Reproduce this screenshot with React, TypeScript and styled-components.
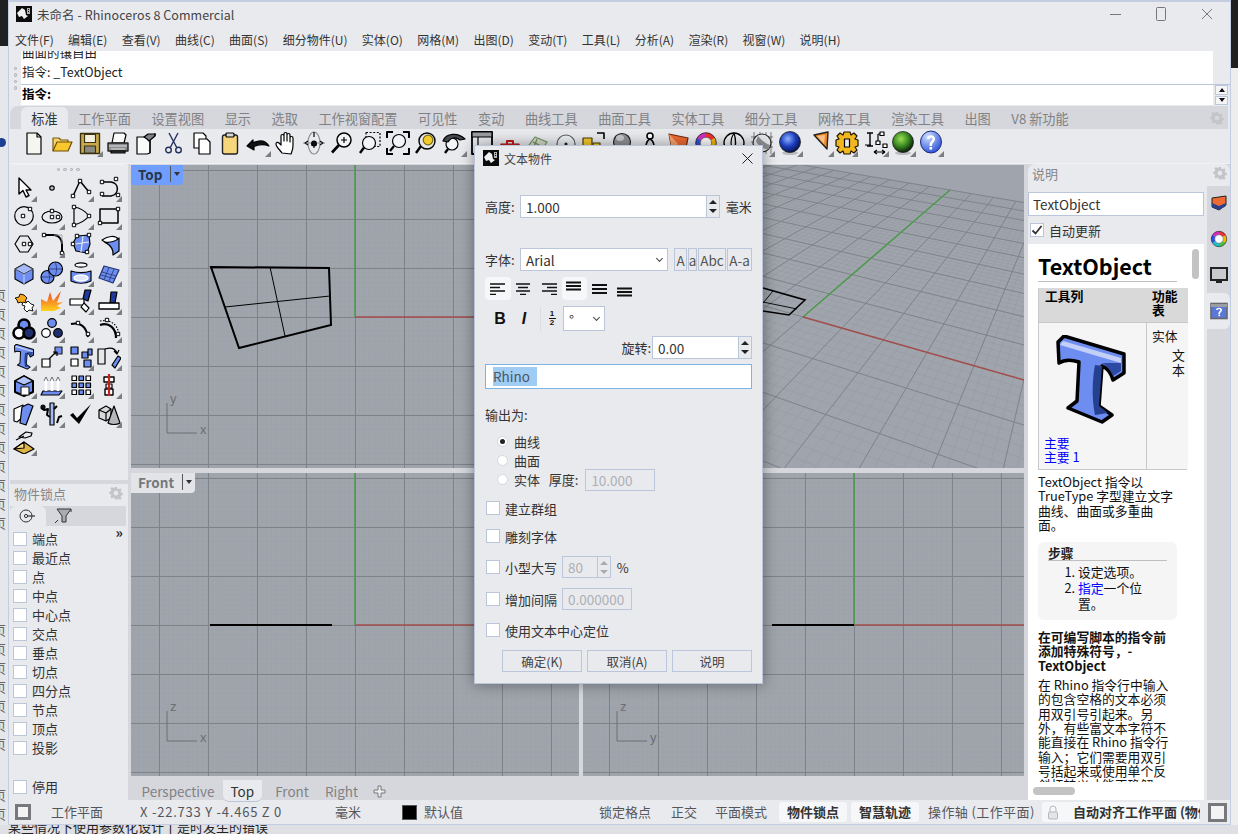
import React from "react";
import styled, { createGlobalStyle } from "styled-components";

const FONT = `"Noto Sans CJK SC", "Noto Sans", sans-serif`;
const PANEL = "#e9eaee";
const STRIP = "#d6d7dc";
const EDGE = "#bcc6da";
const BLUE = "#6d8ef0";

const GlobalStyle = createGlobalStyle`
  html, body { margin: 0; padding: 0; background: #e3e4e8; }
  * { box-sizing: border-box; }
  body { font-family: ${FONT}; font-size: 13px; color: #333; }
`;

/* ---------- page shell ---------- */

const Desktop = styled.div`
  width: 1238px;
  height: 834px;
  display: grid;
  grid-template-columns: 8px 1223px 7px;
  grid-template-rows: 825px 9px;
  overflow: hidden;
`;

const LeftSliver = styled.div`
  background: #e6e7ea;
  overflow: hidden;
  display: flex;
  flex-direction: column;
`;

const DarkCap = styled.div<{ $h: number }>`
  height: ${({ $h }) => $h}px;
  flex: none;
  background: #1f2022;
`;

const SliverDot = styled.div`
  width: 9px;
  height: 9px;
  margin: 92px 0 0 -3px;
  flex: none;
  border-radius: 50%;
  background: #1c3f94;
`;

const SliverText = styled.div<{ $mt: number }>`
  margin: ${({ $mt }) => $mt}px 0 0 -7px;
  width: 30px;
  flex: none;
  font-size: 13px;
  line-height: 19px;
  color: #666;
`;

const RightSliver = styled.div`
  background: #eceded;
  overflow: hidden;
`;

const BottomSliver = styled.div`
  grid-column: 1 / 4;
  background: #dfe0e4;
  overflow: hidden;
  padding-left: 8px;
  font-size: 13px;
  line-height: 14px;
  color: #222;
`;

const BottomText = styled.div`
  margin-top: -5px;
  white-space: nowrap;
`;

const Window = styled.div`
  position: relative;
  display: flex;
  flex-direction: column;
  height: 825px;
  background: ${PANEL};
  border: 1px solid #c3cce0;
  border-top-width: 2px;
`;

/* ---------- title + menu ---------- */

const TitleBar = styled.div`
  height: 28px;
  flex: none;
  display: flex;
  align-items: center;
  padding: 0 0 4px 7px;
`;

const TitleText = styled.span`
  margin-left: 5px;
  font-size: 12.5px;
  color: #444;
  letter-spacing: 0.05px;
`;

const Caption = styled.div`
  margin-left: auto;
  display: flex;
  height: 24px;
`;

const CaptionButton = styled.div`
  width: 46px;
  display: flex;
  align-items: center;
  justify-content: center;
`;

const MenuBar = styled.div`
  height: 21px;
  flex: none;
  display: flex;
  padding-left: 6px;
  gap: 14.35px;
  font-size: 12px;
  line-height: 19px;
  color: #333;
`;

/* ---------- command pane ---------- */

const CommandPane = styled.div`
  flex: none;
  height: 54px;
  display: flex;
  padding-left: 1px;
`;

const SideGrip = styled.div`
  width: 11px;
  flex: none;
  display: flex;
  flex-direction: column;
  align-items: center;
  justify-content: center;
  gap: 3px;
  border-radius: 6px 0 0 6px;
  background: ${PANEL};
`;

const GripDot = styled.i`
  width: 3.5px;
  height: 3.5px;
  border-radius: 50%;
  border: 1px solid #a8abb2;
  background: #dadbe0;
`;

const CommandBody = styled.div`
  flex: 1;
  display: flex;
  flex-direction: column;
`;

const CommandHistory = styled.div`
  height: 33px;
  flex: none;
  background: #fff;
  margin-right: 17px;
  overflow: hidden;
  padding-left: 1px;
  font-size: 12.5px;
  line-height: 20px;
  color: #222;
`;

const ClippedLine = styled.div`
  margin-top: -8px;
  height: 19px;
`;

const CommandSplit = styled.div`
  height: 1px;
  flex: none;
  background: ${EDGE};
`;

const CommandInput = styled.div`
  height: 20px;
  flex: none;
  display: flex;
  background: #fff;
  padding-left: 1px;
  font-size: 12.5px;
  font-weight: 700;
  line-height: 17px;
  color: #000;
`;

const InputSpin = styled.div`
  margin-left: auto;
  width: 17px;
  background: ${PANEL};
  display: flex;
  flex-direction: column;
  align-items: center;
  justify-content: center;
  gap: 1px;
`;

const SpinKey = styled.div<{ $up?: boolean }>`
  width: 13px;
  height: 10px;
  background: #f4f5f7;
  border: 1px solid ${EDGE};
  display: flex;
  align-items: center;
  justify-content: center;
  &::after {
    content: "";
    border-left: 3px solid transparent;
    border-right: 3px solid transparent;
    ${({ $up }) => `${$up ? "border-bottom" : "border-top"}: 4px solid #111;`}
  }
`;

/* ---------- toolbar ---------- */

const ToolSection = styled.div`
  flex: none;
  margin: 1px 2px 0 1px;
  height: 57px;
  display: flex;
  flex-direction: column;
  border-radius: 8px 0 0 0;
  overflow: hidden;
`;

const ToolTabs = styled.div`
  height: 23px;
  flex: none;
  display: flex;
  align-items: flex-end;
  background: ${STRIP};
  padding-left: 11px;
  position: relative;
`;

const ToolTab = styled.div<{ $active?: boolean }>`
  height: 22px;
  padding: 0 10.25px;
  font-size: 13.2px;
  line-height: 24px;
  white-space: nowrap;
  color: ${({ $active }) => ($active ? "#333" : "#808185")};
  background: ${({ $active }) => ($active ? PANEL : "transparent")};
  border-radius: 6px 6px 0 0;
`;

const GearSpot = styled.div`
  position: absolute;
  right: 4px;
  top: 4px;
  width: 14px;
  height: 14px;
`;

const IconRow = styled.div`
  flex: 1;
  display: flex;
  padding: 0 0 0 10px;
  background: ${PANEL};
`;

const Slot = styled.div<{ $w?: number; $fly?: boolean; $ml?: number }>`
  position: relative;
  width: ${({ $w }) => $w || 28}px;
  height: 28px;
  flex: none;
  margin-left: ${({ $ml }) => $ml || 0}px;
  display: flex;
  align-items: center;
  justify-content: center;
  ${({ $fly }) =>
    $fly
      ? `&::after {
    content: "";
    position: absolute;
    right: 1px;
    bottom: 0;
    border-left: 6px solid transparent;
    border-bottom: 6px solid #7d7e82;
  }`
      : ""}
`;

/* ---------- main area ---------- */

const MainRow = styled.div`
  flex: 1;
  min-height: 0;
  display: flex;
  background: ${STRIP};
  border-top: 1px solid #f0f1f3;
`;

const LeftDock = styled.div`
  width: 119px;
  flex: none;
  display: flex;
  flex-direction: column;
  padding-left: 1px;
  background: ${PANEL};
`;

const ToolPanel = styled.div`
  height: 316px;
  flex: none;
  margin-right: 2px;
  border-radius: 7px 7px 0 0;
  background: ${PANEL};
  border-top: 1px solid #f2f2f4;
`;

const TopGrip = styled.div`
  height: 9px;
  display: flex;
  align-items: center;
  justify-content: center;
  gap: 3px;
`;

const ToolGrid = styled.div`
  display: grid;
  grid-template-columns: repeat(4, 28.3px);
  grid-auto-rows: 28.2px;
`;

const DockGap = styled.div`
  height: 4px;
  flex: none;
  background: ${STRIP};
`;

const SnapPanel = styled.div`
  flex: 1;
  margin-right: 2px;
  display: flex;
  flex-direction: column;
  min-height: 0;
`;

const PanelHead = styled.div`
  height: 22px;
  flex: none;
  display: flex;
  align-items: center;
  justify-content: space-between;
  padding: 0 3px 4px 4px;
  font-size: 13px;
  color: #85868a;
  border-radius: 7px 7px 0 0;
  background: ${PANEL};
`;

const SnapTabs = styled.div`
  height: 20px;
  flex: none;
  display: flex;
  background: ${STRIP};
`;

const SnapTab = styled.div<{ $active?: boolean }>`
  width: 36px;
  display: flex;
  align-items: center;
  justify-content: center;
  background: ${({ $active }) => ($active ? PANEL : "transparent")};
  border-radius: 6px 6px 0 0;
`;

const SnapList = styled.div`
  position: relative;
  flex: 1;
  display: flex;
  flex-direction: column;
  padding: 3px 0 0 3px;
`;

const SnapRow = styled.label<{ $gapTop?: number }>`
  height: 19px;
  flex: none;
  display: flex;
  align-items: center;
  gap: 5px;
  margin-top: ${({ $gapTop }) => $gapTop || 0}px;
  font-size: 13px;
  color: #333;
`;

const Box = styled.span`
  width: 14px;
  height: 14px;
  flex: none;
  background: #fff;
  border: 1px solid ${EDGE};
  display: flex;
  align-items: center;
  justify-content: center;
`;

const DialogBox = styled(Box)`
  margin: 0 5px 0 1px;
`;

const MoreMark = styled.span`
  position: absolute;
  right: 3px;
  top: -1px;
  font-size: 14px;
  font-weight: 700;
  line-height: 14px;
  color: #222;
`;

const Center = styled.div`
  flex: 1;
  min-width: 0;
  display: flex;
  flex-direction: column;
  padding: 1px 3px 0 3px;
`;

const ViewGrid = styled.div`
  flex: none;
  display: grid;
  grid-template-columns: 448px 441px;
  grid-template-rows: 303px 303px;
  column-gap: 4px;
  row-gap: 5px;
`;

const Viewport = styled.div`
  position: relative;
  overflow: hidden;
  background: #a0a5ad;
  & > svg {
    display: block;
  }
`;

const ViewLabel = styled.div<{ $active?: boolean }>`
  position: absolute;
  left: 0;
  top: 0;
  height: 20px;
  display: flex;
  align-items: center;
  padding: 0 0 2px 7px;
  gap: 8px;
  font-size: 13.5px;
  font-weight: 700;
  color: ${({ $active }) => ($active ? "#2b3648" : "#77787c")};
  background: ${({ $active }) => ($active ? "#6f9eff" : "#e3e4e8")};
  border-radius: 0 0 4px 0;
`;

const LabelArrow = styled.span`
  height: 16px;
  border-left: 1px solid #555;
  padding: 6px 3px 0 3px;
  display: block;
  &::after {
    content: "";
    display: block;
    border-left: 3.5px solid transparent;
    border-right: 3.5px solid transparent;
    border-top: 4px solid #333;
  }
`;

const ViewTabs = styled.div`
  height: 27px;
  flex: none;
  display: flex;
  align-items: flex-start;
  padding: 4px 0 0 3px;
  font-size: 13.5px;
  color: #808185;
`;

const ViewTab = styled.div<{ $active?: boolean }>`
  height: 22px;
  line-height: 23px;
  padding: 0 7.5px;
  margin-right: ${({ $active }) => ($active ? 6 : 1)}px;
  color: ${({ $active }) => ($active ? "#333" : "#808185")};
  background: ${({ $active }) => ($active ? PANEL : "transparent")};
  border-radius: ${({ $active }) => ($active ? "0 0 6px 6px" : "0")};
  border-bottom: ${({ $active }) => ($active ? `1px solid ${EDGE}` : "none")};
`;

const PlusTab = styled.div`
  margin-left: 6px;
  height: 22px;
  display: flex;
  align-items: center;
`;

/* ---------- help dock ---------- */

const RightDock = styled.div`
  width: 202px;
  flex: none;
  display: flex;
  flex-direction: column;
`;

const DockBody = styled.div`
  flex: 1;
  min-height: 0;
  display: flex;
`;

const HelpColumn = styled.div`
  width: 179px;
  flex: none;
  display: flex;
  flex-direction: column;
  background: ${PANEL};
`;

const SearchBox = styled.div`
  margin: 6px 0 0 0;
  width: 176px;
  height: 24px;
  flex: none;
  background: #fff;
  border: 1px solid ${EDGE};
  padding-left: 4px;
  font-size: 13.5px;
  line-height: 22px;
  color: #333;
`;

const AutoRow = styled.label`
  height: 28px;
  flex: none;
  display: flex;
  align-items: center;
  gap: 5px;
  padding-left: 2px;
  font-size: 13px;
  color: #333;
`;

const HelpPage = styled.div`
  position: relative;
  width: 176px;
  flex: 1;
  min-height: 0;
  background: #fff;
  display: flex;
  flex-direction: column;
  font-size: 12.8px;
  line-height: 14.3px;
  color: #111;
`;

const HelpScroll = styled.div`
  flex: 1;
  min-height: 0;
  overflow: hidden;
  padding: 8px 0 0 10px;
`;

const HelpBar = styled.div`
  height: 18px;
  flex: none;
  padding: 5px 0 0 5px;
`;

const HBarThumb = styled.div`
  width: 42px;
  height: 8px;
  border-radius: 4px;
  background: #c3c3c3;
`;

const VBarThumb = styled.div`
  position: absolute;
  right: 5px;
  top: 5px;
  width: 7px;
  height: 30px;
  border-radius: 4px;
  background: #c3c3c3;
`;

const HelpTitle = styled.h1`
  margin: 0;
  width: 139px;
  height: 30px;
  border-bottom: 1px solid #bfbfbf;
  font-size: 21.5px;
  font-weight: 700;
  line-height: 27px;
  color: #000;
`;

const HelpTable = styled.div`
  margin-top: 6px;
  width: 149px;
  height: 182px;
  border-left: 1px solid #c9c9c9;
  border-bottom: 1px solid #c9c9c9;
  display: grid;
  grid-template-columns: 107px 42px;
  grid-template-rows: 34px 1fr;
`;

const HeadCell = styled.div`
  background: #d9d9d9;
  padding: 1px 0 0 6px;
  font-weight: 700;
  color: #000;
`;

const BodyCell = styled.div`
  background: #f5f5f5;
  border-top: 1px solid #c9c9c9;
  display: flex;
  flex-direction: column;
`;

const RightBodyCell = styled(BodyCell)`
  border-left: 1px solid #c9c9c9;
  padding: 6px 0 0 5px;
`;

const Indented = styled.div`
  margin: 5px 0 0 20px;
  width: 14px;
`;

const IconHolder = styled.div`
  padding: 12px 0 0 16px;
  height: 113px;
`;

const HelpLinks = styled.div`
  padding-left: 5px;
  color: #00f;
`;

const Para = styled.p<{ $mt?: number }>`
  margin: ${({ $mt }) => $mt || 0}px 0 0 0;
  width: 140px;
`;

const StepsBox = styled.div`
  margin-top: 10px;
  width: 139px;
  height: 78px;
  background: #f5f5f5;
  border-radius: 6px;
  padding: 4px 10px 0;
`;

const StepsHead = styled.div`
  height: 15px;
  border-bottom: 1px solid #bfbfbf;
  font-weight: 700;
  color: #222;
  line-height: 13px;
`;

const Steps = styled.ol`
  margin: 3px 0 0;
  padding-left: 30px;
  width: 105px;
  line-height: 16px;
`;

const BlueLink = styled.span`
  color: #00f;
`;

const SideTabs = styled.div`
  flex: 1;
  display: flex;
  flex-direction: column;
  margin-top: -1px;
`;

const SideTab = styled.div<{ $active?: boolean }>`
  height: 36px;
  display: flex;
  align-items: center;
  justify-content: center;
  background: ${({ $active }) => ($active ? PANEL : "transparent")};
  border-radius: ${({ $active }) => ($active ? "0 6px 6px 0" : "0")};
`;

/* ---------- status bar ---------- */

const StatusBar = styled.div`
  height: 24px;
  flex: none;
  display: flex;
  align-items: center;
  padding-left: 6px;
  font-size: 13px;
  color: #55565a;
  white-space: nowrap;
  overflow: hidden;
`;

const StatusCell = styled.div<{ $w: number; $chip?: boolean; $bold?: boolean; $track?: number }>`
  width: ${({ $w }) => $w}px;
  flex: none;
  height: 20px;
  line-height: 20px;
  display: flex;
  align-items: center;
  ${({ $chip }) => ($chip ? "justify-content: center; background: #f6f7f9; border-radius: 3px;" : "")}
  font-weight: ${({ $bold }) => ($bold ? 700 : 400)};
  color: ${({ $bold }) => ($bold ? "#333" : "#55565a")};
  letter-spacing: ${({ $track }) => $track || 0}px;
  overflow: hidden;
`;

const LongChip = styled(StatusCell)`
  justify-content: flex-start;
  padding-left: 5px;
  gap: 14px;
  & > svg {
    flex: none;
  }
`;

const Swatch = styled.span`
  width: 15px;
  height: 15px;
  margin-right: 7px;
  background: #000;
  border: 1px solid #555;
`;

/* ---------- dialog ---------- */

const Dialog = styled.div`
  position: absolute;
  left: 465px;
  top: 143px;
  width: 289px;
  height: 539px;
  padding: 0 10px;
  background: ${PANEL};
  border: 1px solid #bcc6da;
  box-shadow: 0 0 14px rgba(0, 0, 0, 0.4);
  font-size: 13px;
  color: #333;
  display: flex;
  flex-direction: column;
`;

const DialogTitle = styled.div`
  height: 26px;
  flex: none;
  margin-right: -10px;
  padding-bottom: 2px;
  display: flex;
  align-items: center;
  gap: 5px;
  margin-left: -2px;
  font-size: 12px;
  color: #444;
`;

const DialogClose = styled.div`
  margin-left: auto;
  width: 30px;
  display: flex;
  justify-content: center;
`;

const Row = styled.div<{ $mt?: number; $h?: number; $end?: boolean }>`
  margin-top: ${({ $mt }) => $mt || 0}px;
  height: ${({ $h }) => $h || 22}px;
  flex: none;
  display: flex;
  align-items: center;
  justify-content: ${({ $end }) => ($end ? "flex-end" : "flex-start")};
`;

const FieldLabel = styled.span<{ $w?: number; $mr?: number }>`
  ${({ $w }) => ($w ? `width: ${$w}px; flex: none;` : "")}
  margin-right: ${({ $mr }) => $mr || 0}px;
  white-space: nowrap;
`;

const Field = styled.div<{ $w: number; $dim?: boolean; $ml?: number; $blue?: boolean }>`
  width: ${({ $w }) => $w}px;
  height: 100%;
  flex: none;
  margin-left: ${({ $ml }) => $ml || 0}px;
  display: flex;
  align-items: center;
  padding-left: 5px;
  background: ${({ $dim }) => ($dim ? "transparent" : "#fff")};
  border: 1px solid ${({ $blue }) => ($blue ? "#7db4e6" : EDGE)};
  font-size: 13.5px;
  color: ${({ $dim }) => ($dim ? "#adb0b5" : "#333")};
`;

const Spinner = styled.div`
  width: 13px;
  height: 100%;
  margin-left: auto;
  flex: none;
  display: flex;
  flex-direction: column;
  align-items: center;
  justify-content: center;
  gap: 5px;
  background: ${PANEL};
  border-left: 1px solid ${EDGE};
`;

const SpinTick = styled.i<{ $up?: boolean; $dim?: boolean }>`
  border-left: 4px solid transparent;
  border-right: 4px solid transparent;
  ${({ $up, $dim }) => `${$up ? "border-bottom" : "border-top"}: 4px solid ${$dim ? "#a9abb0" : "#222"};`}
`;

const Chevron = styled.i`
  margin-left: auto;
  margin-right: 5px;
  width: 5px;
  height: 5px;
  margin-top: -3px;
  border-right: 1px solid #444;
  border-bottom: 1px solid #444;
  transform: rotate(45deg);
`;

const FaceKeys = styled.div`
  height: 100%;
  margin-left: 6px;
  display: flex;
  gap: 1px;
`;

const FaceKey = styled.div<{ $w: number }>`
  width: ${({ $w }) => $w}px;
  height: 100%;
  flex: none;
  display: flex;
  align-items: center;
  justify-content: center;
  border: 1px solid ${EDGE};
  background: ${PANEL};
  font-size: 13.5px;
  color: #555;
`;

const FormatKey = styled.div<{ $on?: boolean; $w?: number }>`
  width: ${({ $w }) => $w || 25.5}px;
  height: 100%;
  flex: none;
  display: flex;
  align-items: center;
  justify-content: center;
  border-radius: 4px;
  background: ${({ $on }) => ($on ? "#f6f7f9" : "transparent")};
`;

const StyleGlyph = styled.span<{ $italic?: boolean }>`
  font-family: "Liberation Sans", sans-serif;
  font-size: 16px;
  font-weight: 700;
  font-style: ${({ $italic }) => ($italic ? "italic" : "normal")};
  color: #111;
`;

const Divider = styled.div`
  width: 1px;
  height: 24px;
  background: #dcdde1;
  margin: 0 2px 0 7px;
`;

const Fraction = styled.span`
  display: flex;
  flex-direction: column;
  align-items: center;
  width: 8px;
  font-family: "Liberation Sans", sans-serif;
  font-size: 8px;
  font-weight: 700;
  line-height: 8px;
  color: #111;
  & > b {
    width: 7px;
    height: 1px;
    background: #111;
  }
`;

const Selected = styled.span`
  background: #9fccf2;
  color: #4a5566;
  padding: 0 7px 0 0;
  margin-left: 2px;
  font-size: 13.5px;
  line-height: 19px;
`;

const RadioGroup = styled.div`
  margin-top: 10px;
  flex: none;
`;

const RadioRow = styled.div`
  height: 19px;
  flex: none;
  display: flex;
  align-items: center;
  padding-left: 12px;
`;

const Radio = styled.span<{ $on?: boolean }>`
  width: 11px;
  height: 11px;
  flex: none;
  margin-right: 6px;
  border-radius: 50%;
  background: #fff;
  border: 1px solid #d5d7dc;
  display: flex;
  align-items: center;
  justify-content: center;
  &::after {
    content: "";
    width: 5px;
    height: 5px;
    border-radius: 50%;
    background: ${({ $on }) => ($on ? "#222" : "transparent")};
  }
`;

const DialogButtons = styled.div`
  margin-top: 9px;
  height: 22px;
  flex: none;
  display: flex;
  justify-content: flex-end;
  gap: 5px;
`;

const DialogButton = styled.div`
  width: 80px;
  display: flex;
  align-items: center;
  justify-content: center;
  border: 1px solid ${EDGE};
  font-size: 12.5px;
  color: #444;
`;

/* ---------- icons ---------- */

const Ic = ({ children, s = 24 }: { children: React.ReactNode; s?: number }) => (
  <svg width={s} height={s} viewBox="0 0 24 24" fill="none" stroke="#000" strokeWidth={1.2} strokeLinejoin="round">
    {children}
  </svg>
);

const H = ({ x, y, f = "#fff" }: { x: number; y: number; f?: string }) => (
  <rect x={x - 1.7} y={y - 1.7} width={3.4} height={3.4} fill={f} stroke="#000" strokeWidth={1} />
);

const Gear = ({ c = "#c4c5c9", s = 14 }: { c?: string; s?: number }) => (
  <svg width={s} height={s} viewBox="0 0 24 24" fill={c}>
    <path
      fillRule="evenodd"
      d="M10 1h4l.7 3.4 2.4 1 2.9-1.9 2.8 2.8-1.9 2.9 1 2.4 3.1.7v4l-3.1.7-1 2.4 1.9 2.9-2.8 2.8-2.9-1.9-2.4 1L14 25h-4l-.7-3.2-2.4-1-2.9 1.9-2.8-2.8 1.9-2.9-1-2.4L-1 14v-4l3.1-.7 1-2.4L1.2 4l2.8-2.8 2.9 1.9 2.4-1zM12 8a4.5 4.5 0 100 9 4.5 4.5 0 000-9z"
      transform="translate(1.2 .8) scale(.9)"
    />
  </svg>
);

const RhinoLogo = ({ s = 16 }: { s?: number }) => (
  <svg width={s} height={s} viewBox="0 0 16 16">
    <rect width="16" height="16" fill="#0c0c0c" />
    <path d="M1 7 L6 2 L9 4 L10 9 L12 10 L8 13 L6 10 L3 11 Z" fill="#f1f1f1" />
    <path d="M11 2h3v6h-3z" fill="#b5b5b5" />
    <path d="M12 3h1v1h-1zM12 5h1v1h-1z" fill="#0c0c0c" />
  </svg>
);

const BigT = ({ w = 72, h = 90 }: { w?: number; h?: number }) => (
  <svg width={w} height={h} viewBox="0 0 72 90">
    <path
      d="M3 7 L9 1 L69 19 L69 38 L58 45 C56 38 53 33 47 31 L44 71 L57 80 L47 87 L13 73 L22 66 L24 27 C18 25 10 24 4 28 Z"
      fill={BLUE}
      stroke="#000"
      strokeWidth="3.5"
      strokeLinejoin="round"
    />
    <path d="M8 6 L66 23 L66 28 L5 10 Z" fill="#c3cff7" />
    <path d="M47 31 L44 71 L53 78 L40 80 C36 60 38 40 40 30 Z" fill="#24408f" />
    <path d="M66 28 L66 36 L58 41 C56 36 52 30 47 28 Z" fill="#2c4aa3" />
  </svg>
);

const WheelColors = ["#f03030", "#f5b800", "#48c040", "#20c0d0", "#3050e0", "#d030c0"];
const ColorWheel = ({ s = 24 }: { s?: number }) => (
  <svg width={s} height={s} viewBox="0 0 24 24" fill="none">
    {WheelColors.map((c, i) => (
      <circle
        key={c}
        cx="12"
        cy="12"
        r="8"
        stroke={c}
        strokeWidth="4.5"
        strokeDasharray="8.4 41.9"
        transform={`rotate(${i * 60 - 90} 12 12)`}
      />
    ))}
    <circle cx="12" cy="12" r="10.3" stroke="#222" strokeWidth=".8" />
    <circle cx="12" cy="12" r="5.6" fill="#fff" stroke="#444" strokeWidth=".6" />
  </svg>
);

const Sphere = ({ id, hi, mid, lo }: { id: string; hi: string; mid: string; lo: string }) => (
  <svg width="24" height="26" viewBox="0 0 24 26">
    <defs>
      <radialGradient id={id} cx="40%" cy="35%" r="65%">
        <stop offset="0" stopColor={hi} />
        <stop offset=".55" stopColor={mid} />
        <stop offset="1" stopColor={lo} />
      </radialGradient>
    </defs>
    <ellipse cx="12" cy="23" rx="8" ry="2" fill="#bcbcc0" />
    <circle cx="12" cy="12" r="10.5" fill={`url(#${id})`} stroke="#222" strokeWidth=".8" />
  </svg>
);

const TOP_ICONS: { fly?: boolean; w?: number; ml?: number; node: React.ReactNode }[] = [
  { node: <Ic><path d="M5 2h10l4 4v17H5z" fill="#f6f6f1" /><path d="M15 2v4h4" /></Ic> },
  { node: <Ic><path d="M3 20V7h6l2 2h7v3" fill="#f5d36a" stroke="#7a5c10" /><path d="M3 20l4-9h15l-4 9z" fill="#fbc72e" stroke="#6a4d08" /></Ic> },
  {
    fly: true,
    node: (
      <Ic>
        <rect x="2.5" y="2.5" width="19" height="20" fill="#c9a94b" stroke="#3a3212" strokeWidth="1.4" />
        <rect x="6.5" y="3.5" width="11" height="8" fill="#f3f0e0" stroke="#3a3212" />
        <rect x="6.5" y="15" width="11" height="7" fill="#8a8a80" stroke="#3a3212" />
      </Ic>
    ),
  },
  {
    node: (
      <Ic>
        <path d="M8 2h10l2 2-2 8H6z" fill="#fafafa" />
        <path d="M2 12h20v8H2z" fill="#8a8c90" stroke="#222" strokeWidth="1.4" />
        <path d="M3 15h18M5 18h14" stroke="#e0e0e0" />
        <path d="M5 20h14v2H5z" fill="#444" />
      </Ic>
    ),
  },
  {
    node: (
      <Ic>
        <path d="M3 6h10l3 3v13l-3 1H3z" fill="#fafafa" />
        <path d="M10 6l4-3h7v2l-6 5-2-2z" fill="#7d8088" />
        <path d="M21 2v3M16 10v12" />
      </Ic>
    ),
  },
  {
    node: (
      <Ic>
        <circle cx="6.5" cy="19" r="2.8" stroke="#23315e" strokeWidth="1.4" />
        <circle cx="16.5" cy="19" r="2.8" stroke="#23315e" strokeWidth="1.4" />
        <path d="M8 17L16 2M15 17L7 2" stroke="#23315e" strokeWidth="1.4" />
      </Ic>
    ),
  },
  { node: <Ic><path d="M4 2h9l3 3v12H4z" fill="#fff" /><path d="M9 8h8l3 3v12H9z" fill="#fff" /></Ic> },
  {
    node: (
      <Ic>
        <rect x="4.5" y="4" width="15" height="19" rx="2" fill="#f6d67a" stroke="#222" strokeWidth="1.4" />
        <rect x="8" y="2" width="8" height="4" rx="1" fill="#d6d7dc" />
      </Ic>
    ),
  },
  {
    fly: true,
    node: (
      <Ic>
        <path d="M1 15l6-6v3c6-3 12-3 16 3-5-2-10-2-15 .5V19z" fill="#111" />
      </Ic>
    ),
  },
  {
    node: (
      <Ic>
        <path
          d="M8 22c-2-3-6-6-6-9 0-2 2-2 3-1l2 2V5c0-2 3-2 3 0v5-7c0-2 3-2 3 0v7-6c0-2 3-2 3 0v7-4c0-2 3-2 3 0v8c0 3-1 5-2 8z"
          fill="#fff"
        />
      </Ic>
    ),
  },
  {
    node: (
      <Ic>
        <ellipse cx="12" cy="12" rx="6" ry="11" stroke="#8b8d92" />
        <path d="M1 12h22" stroke="#8b8d92" />
        <path d="M12 1v5" />
        <path d="M9 14h6M12 11v6M6 10L3 12l3 2M18 10l3 2-3 2" stroke="#111" />
        <circle cx="12" cy="12.5" r="2.3" fill="#111" />
      </Ic>
    ),
  },
  { node: <Ic><circle cx="14" cy="9" r="7" fill="#f3f4f6" strokeWidth="1.5" /><path d="M9 14L2 21.5" strokeWidth="2.6" /><path d="M11 9h6M14 6v6" /></Ic> },
  {
    node: (
      <Ic>
        <rect x="8" y="1.5" width="14" height="14" strokeDasharray="2 1.6" />
        <circle cx="11" cy="12" r="6.5" fill="#f3f4f6" />
        <path d="M6 16.5L2 22" strokeWidth="2.4" />
      </Ic>
    ),
  },
  {
    node: (
      <Ic>
        <path d="M1 7V1h6M17 1h6v6M1 17v6h6M17 23h6v-6" strokeWidth="2" />
        <circle cx="13" cy="10" r="6.5" fill="#f3f4f6" />
        <path d="M8 15l-4 5" strokeWidth="2.2" />
      </Ic>
    ),
  },
  {
    node: (
      <Ic>
        <circle cx="13" cy="10" r="8" fill="#e6e6e6" strokeWidth="1.4" />
        <circle cx="14" cy="9" r="4.8" fill="#f2cc2b" stroke="#7a6a10" />
        <path d="M7 15l-5 7" strokeWidth="2.4" />
      </Ic>
    ),
  },
  {
    fly: true,
    node: (
      <Ic>
        <circle cx="10" cy="13" r="6" fill="#f3f4f6" />
        <path d="M6 18l-3 4" strokeWidth="2.4" />
        <path d="M1 10C4 2 16 1 23 8l-5 1c-4-3-9-3-12 2z" fill="#45484f" />
      </Ic>
    ),
  },
  { node: <Ic><rect x="2" y="1" width="20" height="22" fill="#e9eaee" strokeWidth="1.8" /><rect x="2" y="1" width="20" height="5" fill="#9b9da3" /><path d="M8 6v17" /></Ic> },
  { node: <Ic><path d="M3 13h18v8H3z" fill="#e23030" stroke="#a01010" /><path d="M9 13v-3h6v3" stroke="#c01818" strokeWidth="2" /><path d="M2 15h20" stroke="#fff" /></Ic> },
  { node: <Ic><path d="M3 14l6-8 12 5-6 9z" fill="#d5dcc8" stroke="#6f8f5f" /><path d="M7 11l10 5M11 8l-3 8" stroke="#6f8f5f" /></Ic> },
  { node: <Ic><circle cx="12" cy="13" r="9" fill="#eceff2" stroke="#555" /><circle cx="12" cy="13" r="1.6" fill="#222" stroke="none" /></Ic> },
  { node: <Ic><rect x="1" y="7" width="9" height="10" fill="#f6c92c" stroke="#4a3c08" /><rect x="11" y="12" width="7" height="10" fill="#f6c92c" stroke="#4a3c08" /><path d="M15 2h7v6" strokeWidth="1.6" /></Ic> },
  { node: <Ic><circle cx="12" cy="11" r="8.5" fill="#8f9196" stroke="#222" /><ellipse cx="10" cy="7" rx="4" ry="3" fill="#c9cacd" stroke="none" /></Ic> },
  { node: <Ic><circle cx="12" cy="5" r="3" fill="#fff" strokeWidth="1.6" /><path d="M8 16c0-4 2-7 4-8 2 1 4 4 4 8z" fill="#d8d9dc" strokeWidth="1.6" /><path d="M6 16h12v3H6z" fill="#111" /></Ic> },
  { node: <Ic><path d="M3 3l19 4-3 14L6 19z" fill="#ef6a33" stroke="#6e2a0c" /><path d="M3 3l3 16 6-6z" fill="#f9a676" stroke="none" /></Ic> },
  { node: <ColorWheel /> },
  { node: <Ic><circle cx="12" cy="12" r="10" fill="#eeeff1" strokeWidth="1.4" /><path d="M12 2c-4 6-4 14 0 20" /><path d="M12 2c2 6 2 14 0 20" fill="#b5b7bb" /></Ic> },
  {
    fly: true,
    node: (
      <Ic>
        <path d="M1 6h22M1 11h22M1 16h22M4 1v22M10 1v22M16 1v22M21 1v22" strokeWidth=".6" stroke="#333" />
        <circle cx="12" cy="12" r="9" fill="#e4e5e8" stroke="#222" />
        <path d="M8 5c3 4 8 8 12 9l-1 4c-5 1-11-3-13-8z" fill="#8d8f94" stroke="none" />
      </Ic>
    ),
  },
  { fly: true, node: <Sphere id="blue-sphere" hi="#8fb1ff" mid="#1c3fc0" lo="#08144c" /> },
  {
    fly: true,
    w: 24,
    ml: 7,
    node: (
      <svg width="24" height="24" viewBox="0 0 24 24">
        <path d="M3 4l14-3-1 17z" fill="#f08a24" stroke="#222" strokeWidth="1.4" strokeLinejoin="round" />
        <path d="M6 5l8-1-1 9z" fill="#f5c08a" />
      </svg>
    ),
  },
  {
    fly: true,
    w: 24,
    node: (
      <Ic>
        <path
          fillRule="evenodd"
          d="M9 1h6l1 3 3-2 3 3-2 3 3 1v6l-3 1 2 3-3 3-3-2-1 3H9l-1-3-3 2-3-3 2-3-3-1V9l3-1-2-3 3-3 3 2z"
          fill="#f2b71e"
          stroke="#1c1400"
        />
        <rect x="9.5" y="8" width="5" height="8" fill="#e9eaee" />
      </Ic>
    ),
  },
  {
    fly: true,
    ml: 3,
    node: (
      <Ic>
        <path d="M6 2v13M3 2h6M3 15h6" strokeWidth="1.4" />
        <path d="M1 14h6M14 3h5M14 3v8M10 21h11M10 21l3-2M10 21l3 2M21 21l-3-2M21 21l-3 2" />
        <rect x="16" y="1" width="4" height="3.5" fill="#fff" />
        <rect x="12" y="10" width="4" height="3.5" fill="#fff" />
        <rect x="19" y="13" width="4" height="3.5" fill="#fff" />
      </Ic>
    ),
  },
  { fly: true, ml: -1, node: <Sphere id="green-sphere" hi="#9adf55" mid="#3b8a22" lo="#0d1f0a" /> },
  {
    fly: true,
    node: (
      <svg width="24" height="26" viewBox="0 0 24 26">
        <defs>
          <radialGradient id="help-sphere" cx="35%" cy="25%" r="75%">
            <stop offset="0" stopColor="#cfe0ff" />
            <stop offset="1" stopColor="#3358d8" />
          </radialGradient>
        </defs>
        <ellipse cx="12" cy="12" rx="10.5" ry="11" fill="url(#help-sphere)" stroke="#1f2f80" />
        <path d="M8 9c0-5 8-5 8 0 0 3-3 3-3 7h-2.5c0-5 3-5 3-7 0-2-3-2-3 0z" fill="#fff" />
        <rect x="10.5" y="17" width="2.6" height="2.6" fill="#fff" />
      </svg>
    ),
  },
];

const PANEL_ICONS: { fly?: boolean; node: React.ReactNode }[] = [
  { fly: true, node: <Ic><path d="M7 2v16l4-3.5L14 21l3-1.5-3-5.5h5z" fill="#fff" strokeWidth="1.4" /></Ic> },
  { node: <Ic><circle cx="12" cy="12" r="2.2" fill="#c4c6cc" /></Ic> },
  { fly: true, node: <Ic><path d="M4 20L11 5l9 11" strokeWidth="1.5" /><H x={4} y={20} /><H x={11} y={5} /><H x={20} y={16} /></Ic> },
  { fly: true, node: <Ic><path d="M5 6h9c8 1 9 12 0 14H5" strokeWidth="1.5" /><H x={5} y={6} /><H x={19} y={3} /><H x={21} y={19} /><H x={5} y={18} /></Ic> },
  { fly: true, node: <Ic><circle cx="12" cy="12" r="9.3" /><H x={11} y={12} /><H x={18} y={5} /></Ic> },
  { fly: true, node: <Ic><ellipse cx="12" cy="13" rx="10" ry="6" /><H x={12} y={7} /><H x={12} y={13} /><H x={18} y={13} /></Ic> },
  { fly: true, node: <Ic><path d="M5 3c8 1 12 5 15 9-3 4-8 7-15 9z" /><H x={5} y={3} /><H x={20} y={12} /><H x={5} y={21} /></Ic> },
  { fly: true, node: <Ic><rect x="3" y="5" width="18" height="14" strokeWidth="1.5" /><H x={3} y={19} /><H x={21} y={5} /></Ic> },
  { fly: true, node: <Ic><path d="M8 4h8l5 8-5 8H8l-5-8z" /><H x={12} y={12} /><H x={18} y={12} /></Ic> },
  { fly: true, node: <Ic><path d="M4 3h10c5 0 8 5 8 9v8" strokeWidth="2" /><H x={4} y={3} /><H x={22} y={21} /><path d="M14 3h8v9" stroke="#999" strokeWidth=".8" /></Ic> },
  { fly: true, node: <Ic><path d="M8 4l12-1 1 9-3 9-11-2-3-8z" fill={BLUE} /><path d="M14 4l-2 16M6 12l14-2" stroke="#e9eaee" /><H x={8} y={4} /><H x={20} y={3} /><H x={4} y={12} /><H x={18} y={20} /></Ic> },
  { fly: true, node: <Ic><path d="M5 8c6-4 13-5 16-1-2 4-9 6-12 4z" fill="#fff" /><path d="M8 10c5 1 12-1 14-4l0 13-6 4c1-6-3-10-8-13z" fill={BLUE} /></Ic> },
  { node: <Ic><path d="M3 8l9-5 9 5v10l-9 5-9-5z" fill={BLUE} strokeWidth="1.1" /><path d="M3 8l9 5 9-5M12 13v10" stroke="#b9c8f8" /><path d="M3 8l9-5 9 5-9 5z" fill="#a5b9f6" stroke="#222" strokeWidth=".8" /></Ic> },
  { fly: true, node: <Ic><circle cx="7.5" cy="16" r="6.5" fill={BLUE} /><circle cx="15.5" cy="8" r="7" fill={BLUE} /><path d="M1 16h13M8 10c2 4 2 9 0 12M9 8h13M15 1c2 4 2 10 0 14" stroke="#24336e" strokeWidth=".8" /></Ic> },
  { fly: true, node: <Ic><ellipse cx="12" cy="4" rx="6" ry="2.2" fill="#fff" /><path d="M2 10c6 2 14 2 20 0v10c-6 3-14 3-20 0z" fill={BLUE} /><ellipse cx="12" cy="17" rx="7" ry="3" fill="#dfe5fa" stroke="#fff" strokeWidth="1.6" /></Ic> },
  { fly: true, node: <Ic><path d="M7 5l15 4-6 13L2 17z" fill={BLUE} stroke="#24336e" /><path d="M12 6.5l-5 12M17 8l-5 12M5 11l14 4M4 14l14 4" stroke="#24336e" strokeWidth=".8" /></Ic> },
  { fly: true, node: <Ic><path d="M3 9l4-1 1-3 4 1 3 3-2 3 3 2-4 2-3-3-3 1-1-3z" fill="#f7a81d" strokeWidth=".9" /><path d="M11 13l3 1 2-2 3 3 3 1-2 3 1 3-4-1-2 2-3-3 1-3-3-1z" fill="#fff" strokeWidth=".9" /></Ic> },
  { fly: true, node: <svg width="24" height="24" viewBox="0 0 24 24"><defs><linearGradient id="burst" x1="0" y1="0" x2="0" y2="1"><stop offset="0" stopColor="#f0442a" /><stop offset="1" stopColor="#ffd21e" /></linearGradient></defs><path d="M1 22V10l6 3 3-10 3 9 8-10-4 12 6-1-6 4 4 2-7 3z" fill="url(#burst)" /></svg> },
  { fly: true, node: <Ic><path d="M16 1h6l-3 11-5-2z" fill="#1f3a9c" /><rect x="1" y="10" width="14" height="6" fill="#fff" /><path d="M15 14l5 5-3 4-5-5z" fill="#fff" /></Ic> },
  { fly: true, node: <Ic><path d="M14 3h6l-2 11h-5z" fill="#1f3a9c" /><path d="M2 14h20v6H2z" fill="#fff" strokeWidth="1.3" /></Ic> },
  { fly: true, node: <Ic><circle cx="12" cy="8" r="5.5" fill={BLUE} strokeWidth="2.6" /><circle cx="7" cy="16" r="5.5" fill="#fff" strokeWidth="2.6" /><circle cx="17" cy="16" r="5.5" fill="#1f2f6e" strokeWidth="2.6" /></Ic> },
  { fly: true, node: <Ic><circle cx="12" cy="6" r="4.3" fill={BLUE} /><circle cx="6" cy="16" r="4.3" fill="#fff" /><circle cx="18" cy="16" r="4.3" fill="#1f2f6e" /></Ic> },
  { fly: true, node: <Ic><path d="M2 7c9-2 15 2 17 13" strokeWidth="2" /><H x={9} y={6} /><H x={19} y={17} /></Ic> },
  { fly: true, node: <Ic><path d="M3 8c9-3 16 3 16 13" strokeWidth="2.2" /><path d="M3 4c10-2 18 3 19 14" strokeDasharray="1.5 1.5" /><H x={10} y={3} /><H x={21} y={17} /></Ic> },
  { fly: true, node: <BigT w={24} h={26} /> },
  { fly: true, node: <Ic><rect x="2" y="14" width="8" height="8" fill="#fff" /><rect x="15" y="2" width="7" height="7" fill={BLUE} stroke="#222" /><path d="M9 14l7-7M13 7h4v4" /></Ic> },
  { fly: true, node: <Ic><rect x="2" y="2" width="7" height="7" fill={BLUE} /><rect x="13" y="7" width="6" height="6" fill={BLUE} /><rect x="2" y="14" width="7" height="7" fill="#fff" /><rect x="15" y="15" width="7" height="7" fill={BLUE} /><rect x="19" y="4" width="4" height="6" fill={BLUE} /></Ic> },
  { fly: true, node: <Ic><rect x="1" y="4" width="7" height="15" fill="#e8e8e8" /><path d="M8 4c6-2 10-1 12 4M17 6l3 3 2-4" /><path d="M15 20l6-9 3 2-6 10z" fill={BLUE} /></Ic> },
  { fly: true, node: <Ic><path d="M3 8l9-5 9 5v11l-9 4-9-4z" fill={BLUE} strokeWidth="2" /><path d="M3 8l9-5 9 5-9 4z" fill="#b3c4f8" /><rect x="9" y="14" width="8" height="8" fill="#fff" stroke="#222" /></Ic> },
  { fly: true, node: <Ic><path d="M3 18h19l-3 4H1z" fill={BLUE} /><path d="M6 18V6M12 18V6M18 18V6" stroke="#fff" strokeWidth="2.6" /><path d="M4 8l2-4 2 4M10 8l2-4 2 4M16 8l2-4 2 4" fill="#fff" stroke="#333" strokeWidth=".7" /></Ic> },
  { fly: true, node: <Ic>{[0, 1, 2].flatMap((r) => [0, 1, 2].map((c) => <rect key={`${r}${c}`} x={3 + c * 7} y={3 + r * 7} width={4.5} height={4.5} fill={r === 1 || c === 1 ? BLUE : "#fff"} />))}</Ic> },
  { fly: true, node: <Ic><rect x="7" y="4" width="10" height="5" fill="#fff" strokeWidth="1.4" /><rect x="9" y="11" width="6" height="4" fill="#fff" /><rect x="8" y="16" width="8" height="6" fill="#fff" strokeWidth="1.4" /><path d="M12 1v22" stroke="#c8201c" strokeWidth="2.2" /></Ic> },
  { fly: true, node: <Ic><path d="M2 7l9-4v12l-6 5-3-1z" fill="#fff" /><path d="M10 5l6-3 5 2-7 19-6-2z" fill={BLUE} /></Ic> },
  { fly: true, node: <Ic><path d="M12 1v22" strokeWidth="1" /><rect x="10" y="1" width="4" height="22" fill="#a5b9f6" /><path d="M1 6l3 2 4-1-1 6 3 2M22 14l-3 1-2 6M17 4l-3 3" strokeWidth="2" /><circle cx="3" cy="5" r="2" fill="#111" /></Ic> },
  { node: <svg width="24" height="24" viewBox="0 0 24 24"><path d="M1 13l3-2 4 5L22 2 10 22z" fill="#000" /></svg> },
  { fly: true, node: <Ic><path d="M2 8l7-4 5 3v9l-5 3-7-3z" fill="#d8d9dc" /><path d="M2 8l7 3 5-4M9 11v8" /><path d="M17 4l6 17c-3 2-9 2-12 0z" fill="#b5b7bb" /></Ic> },
  { fly: true, node: <Ic><path d="M12 12L2 19l10 5 10-5z" fill="#e0b546" /><path d="M12 12L2 19l10-1z" fill="#f6dc8c" /><path d="M7 7l7-5 6 1-1 3-6 2z" fill="#e9eaee" /><path d="M4 10l8-4" /></Ic> },
];

/* ---------- viewports ---------- */

const VIEW_W = 448;
const VIEW_H = 303;

const FlatGrid = ({
  id,
  ox,
  oy,
  w,
  h,
  axis,
  children,
}: {
  id: string;
  ox: number;
  oy: number;
  w: number;
  h: number;
  axis: [string, string, number];
  children?: React.ReactNode;
}) => (
  <svg width={w} height={h} viewBox={`0 0 ${w} ${h}`}>
    <defs>
      <pattern id={`${id}-minor`} width="4.9" height="4.9" patternUnits="userSpaceOnUse" patternTransform={`translate(${ox} ${oy})`}>
        <path d="M4.9 0V4.9H0" fill="none" stroke="#989ca4" strokeWidth=".7" />
      </pattern>
      <pattern id={`${id}-major`} width="49" height="49" patternUnits="userSpaceOnUse" patternTransform={`translate(${ox} ${oy})`}>
        <path d="M.5 0V49M0 .5H49" fill="none" stroke="#7f8289" strokeWidth="1" />
      </pattern>
    </defs>
    <rect width={w} height={h} fill={`url(#${id}-minor)`} />
    <rect width={w} height={h} fill={`url(#${id}-major)`} />
    <path d={`M${ox} ${oy}H${w}`} stroke="#a44e4e" strokeWidth="1.6" />
    <path d={`M${ox} ${oy}V0`} stroke="#4f9a4f" strokeWidth="1.6" />
    {children}
    <path d={`M${axis[2]} 238V268H${axis[2] + 30}`} fill="none" stroke="#6c6e73" strokeWidth="1" />
    <text x={axis[2] + 3} y="238" fontFamily="Liberation Sans" fontSize="13" fill="#6c6e73">
      {axis[0]}
    </text>
    <text x={axis[2] + 33} y="269" fontFamily="Liberation Sans" fontSize="13" fill="#6c6e73">
      {axis[1]}
    </text>
  </svg>
);

// perspective plane mapped to the screen by a homography fitted to the red/green axes
const project = (u: number, v: number): [number, number] => {
  const d = 1 - 0.1439 * u + v;
  return [
    220 + (189 * u + 294 * v) / d,
    152 + (54 * u - 254 * v) / d,
  ];
};

const planeSegments = (stepU: number, stepV: number) => {
  const parts: string[] = [];
  const seg = (a: [number, number], b: [number, number]) =>
    `M${a[0].toFixed(1)} ${a[1].toFixed(1)}L${b[0].toFixed(1)} ${b[1].toFixed(1)}`;
  for (let u = -2; u <= 2.001; u += stepU) parts.push(seg(project(u, -0.62), project(u, 1)));
  for (let v = -0.6; v <= 1.001; v += stepV) parts.push(seg(project(-2, v), project(2, v)));
  return parts.join("");
};

const PerspectiveView = () => (
  <svg width="441" height={VIEW_H} viewBox={`0 0 441 ${VIEW_H}`}>
    <path d={planeSegments(0.04, 0.02)} stroke="#959aa2" strokeWidth=".6" fill="none" />
    <path d={planeSegments(0.2, 0.1)} stroke="#7d8088" strokeWidth=".9" fill="none" />
    <path d="M220 152L367 25" stroke="#4f9a4f" strokeWidth="1.6" />
    <path d="M220 152L441 215" stroke="#a44e4e" strokeWidth="1.6" />
    <path d="M180 123L222 135 206 150 180 146" fill="none" stroke="#000" strokeWidth="1.6" />
    <path d="M190 126L180 138M180 137L214 144" stroke="#000" strokeWidth=".9" />
  </svg>
);

const GlyphColumn = ({ n, mt }: { n: number; mt: number }) => (
  <SliverText $mt={mt}>
    {Array.from({ length: n }, (_, i) => (
      <div key={i}>页</div>
    ))}
  </SliverText>
);

const App = () => {
  const grip = [0, 1, 2, 3];
  const snaps = ["端点", "最近点", "点", "中点", "中心点", "交点", "垂点", "切点", "四分点", "节点", "顶点", "投影"];
  return (
    <>
      <GlobalStyle />
      <Desktop>
        <LeftSliver>
          <DarkCap $h={46} />
          <SliverDot />
          <GlyphColumn n={13} mt={138} />
          <GlyphColumn n={7} mt={88} />
          <GlyphColumn n={3} mt={32} />
        </LeftSliver>

        <Window>
          <TitleBar>
            <RhinoLogo />
            <TitleText>未命名 - Rhinoceros 8 Commercial</TitleText>
            <Caption>
              <CaptionButton>
                <svg width="11" height="11" viewBox="0 0 11 11">
                  <path d="M0 5.5h11" stroke="#777" />
                </svg>
              </CaptionButton>
              <CaptionButton>
                <svg width="12" height="14" viewBox="0 0 12 14">
                  <rect x="1.5" y=".5" width="9" height="13" rx="1" fill="none" stroke="#777" />
                </svg>
              </CaptionButton>
              <CaptionButton>
                <svg width="12" height="12" viewBox="0 0 12 12">
                  <path d="M1 1l10 10M11 1L1 11" stroke="#777" />
                </svg>
              </CaptionButton>
            </Caption>
          </TitleBar>

          <MenuBar>
            {["文件(F)", "编辑(E)", "查看(V)", "曲线(C)", "曲面(S)", "细分物件(U)", "实体(O)", "网格(M)", "出图(D)", "变动(T)", "工具(L)", "分析(A)", "渲染(R)", "视窗(W)", "说明(H)"].map((m) => (
              <span key={m}>{m}</span>
            ))}
          </MenuBar>

          <CommandPane>
            <SideGrip>
              {grip.map((i) => (
                <GripDot key={i} />
              ))}
            </SideGrip>
            <CommandBody>
              <CommandHistory>
                <ClippedLine>曲面的镶自由</ClippedLine>
                <div>指令: _TextObject</div>
              </CommandHistory>
              <CommandSplit />
              <CommandInput>
                指令:
                <InputSpin>
                  <SpinKey $up />
                  <SpinKey />
                </InputSpin>
              </CommandInput>
            </CommandBody>
          </CommandPane>

          <ToolSection>
            <ToolTabs>
              <ToolTab $active>标准</ToolTab>
              {["工作平面", "设置视图", "显示", "选取", "工作视窗配置", "可见性", "变动", "曲线工具", "曲面工具", "实体工具", "细分工具", "网格工具", "渲染工具", "出图", "V8 新功能"].map((t) => (
                <ToolTab key={t}>{t}</ToolTab>
              ))}
              <GearSpot>
                <Gear />
              </GearSpot>
            </ToolTabs>
            <IconRow>
              {TOP_ICONS.map((icon, i) => (
                <Slot key={i} $fly={icon.fly} $w={icon.w} $ml={icon.ml}>
                  {icon.node}
                </Slot>
              ))}
            </IconRow>
          </ToolSection>

          <MainRow>
            <LeftDock>
              <ToolPanel>
                <TopGrip>
                  {grip.map((i) => (
                    <GripDot key={i} />
                  ))}
                </TopGrip>
                <ToolGrid>
                  {PANEL_ICONS.map((icon, i) => (
                    <Slot key={i} $fly={icon.fly}>
                      {icon.node}
                    </Slot>
                  ))}
                </ToolGrid>
              </ToolPanel>
              <DockGap />
              <SnapPanel>
                <PanelHead>
                  物件锁点
                  <Gear />
                </PanelHead>
                <SnapTabs>
                  <SnapTab $active>
                    <svg width="18" height="14" viewBox="0 0 18 14" fill="none" stroke="#333">
                      <circle cx="7" cy="7" r="6" />
                      <circle cx="7" cy="7" r="1.6" />
                      <path d="M8.5 7H16" strokeWidth="1.2" />
                    </svg>
                  </SnapTab>
                  <SnapTab>
                    <svg width="20" height="16" viewBox="0 0 20 16" fill="none" stroke="#333">
                      <path d="M3 1h14l-5 7v6H8V8z" fill="#a9abb0" />
                      <path d="M17 4V1M1 15l3-3" />
                    </svg>
                  </SnapTab>
                </SnapTabs>
                <SnapList>
                  <MoreMark>»</MoreMark>
                  {snaps.map((s) => (
                    <SnapRow key={s}>
                      <Box />
                      {s}
                    </SnapRow>
                  ))}
                  <SnapRow $gapTop={20}>
                    <Box />
                    停用
                  </SnapRow>
                </SnapList>
              </SnapPanel>
            </LeftDock>

            <Center>
              <ViewGrid>
                <Viewport>
                  <FlatGrid id="top" ox={224} oy={152} w={VIEW_W} h={VIEW_H} axis={["y", "x", 36]}>
                    <path d="M80 102L198 103 200 160 108 183Z" fill="none" stroke="#000" strokeWidth="2" />
                    <path d="M139 102L154 171M94 142L199 131" fill="none" stroke="#000" strokeWidth="1" />
                  </FlatGrid>
                  <ViewLabel $active>
                    Top
                    <LabelArrow />
                  </ViewLabel>
                </Viewport>
                <Viewport>
                  <PerspectiveView />
                </Viewport>
                <Viewport>
                  <FlatGrid id="front" ox={224} oy={152} w={VIEW_W} h={VIEW_H} axis={["z", "x", 36]}>
                    <path d="M79 152H201" stroke="#000" strokeWidth="2" />
                  </FlatGrid>
                  <ViewLabel>
                    Front
                    <LabelArrow />
                  </ViewLabel>
                </Viewport>
                <Viewport>
                  <FlatGrid id="right" ox={271} oy={152} w={441} h={VIEW_H} axis={["z", "y", 34]}>
                    <path d="M189 152H271" stroke="#000" strokeWidth="2" />
                  </FlatGrid>
                </Viewport>
              </ViewGrid>
              <ViewTabs>
                <ViewTab>Perspective</ViewTab>
                <ViewTab $active>Top</ViewTab>
                <ViewTab>Front</ViewTab>
                <ViewTab>Right</ViewTab>
                <PlusTab>
                  <svg width="13" height="13" viewBox="0 0 13 13" fill="#eceded" stroke="#77787c">
                    <path d="M5 1h3v4h4v3H8v4H5V8H1V5h4z" />
                  </svg>
                </PlusTab>
              </ViewTabs>
            </Center>

            <RightDock>
              <PanelHead>
                说明
                <Gear />
              </PanelHead>
              <DockBody>
                <HelpColumn>
                  <SearchBox>TextObject</SearchBox>
                  <AutoRow>
                    <Box>
                      <svg width="12" height="12" viewBox="0 0 12 12" fill="none" stroke="#333" strokeWidth="1.8">
                        <path d="M1.5 6.5l3 3 6-7.5" />
                      </svg>
                    </Box>
                    自动更新
                  </AutoRow>
                  <HelpPage>
                    <VBarThumb />
                    <HelpScroll>
                      <HelpTitle>TextObject</HelpTitle>
                      <HelpTable>
                        <HeadCell>工具列</HeadCell>
                        <HeadCell>
                          功能
                          <br />表
                        </HeadCell>
                        <BodyCell>
                          <IconHolder>
                            <BigT />
                          </IconHolder>
                          <HelpLinks>
                            主要
                            <br />
                            主要 1
                          </HelpLinks>
                        </BodyCell>
                        <RightBodyCell>
                          实体
                          <Indented>文本</Indented>
                        </RightBodyCell>
                      </HelpTable>
                      <Para $mt={5}>
                        TextObject 指令以
                        <br />
                        TrueType 字型建立文字
                        <br />
                        曲线、曲面或多重曲
                        <br />
                        面。
                      </Para>
                      <StepsBox>
                        <StepsHead>步骤</StepsHead>
                        <Steps>
                          <li>设定选项。</li>
                          <li>
                            <BlueLink>指定</BlueLink>一个位置。
                          </li>
                        </Steps>
                      </StepsBox>
                      <Para $mt={10}>
                        <b>
                          在可编写脚本的指令前
                          <br />
                          添加特殊符号，-
                          <br />
                          TextObject
                        </b>
                      </Para>
                      <Para $mt={5}>
                        在 Rhino 指令行中输入
                        <br />
                        的包含空格的文本必须
                        <br />
                        用双引号引起来。另
                        <br />
                        外，有些富文本字符不
                        <br />
                        能直接在 Rhino 指令行
                        <br />
                        输入；它们需要用双引
                        <br />
                        号括起来或使用单个反
                        <br />
                        斜杠转义才能正确解
                      </Para>
                    </HelpScroll>
                    <HelpBar>
                      <HBarThumb />
                    </HelpBar>
                  </HelpPage>
                </HelpColumn>
                <SideTabs>
                  <SideTab>
                    <svg width="18" height="18" viewBox="0 0 18 18">
                      <path d="M2 4l14-2v9l-7 5-7-3z" fill="#ef6a33" stroke="#222" />
                      <path d="M2 9l7 3 7-3v3l-7 4-7-3z" fill="#2a3f88" />
                    </svg>
                  </SideTab>
                  <SideTab>
                    <ColorWheel s={18} />
                  </SideTab>
                  <SideTab>
                    <svg width="18" height="18" viewBox="0 0 18 18">
                      <rect x="1" y="2" width="16" height="12" fill="#c9cacd" stroke="#222" strokeWidth="2" />
                      <path d="M6 15h6v2H6z" fill="#222" />
                    </svg>
                  </SideTab>
                  <SideTab $active>
                    <svg width="18" height="18" viewBox="0 0 18 18">
                      <rect x="1" y="1.5" width="16" height="15" fill="#5a78d8" stroke="#66686e" strokeWidth="1.6" />
                      <rect x="1" y="2" width="16" height="3" fill="#9b9da3" />
                      <path d="M6 8c0-3 6-3 6 0 0 2-2 2-2 4H8.4c0-3 2-3 2-4 0-1-3-1-3 0z" fill="#fff" />
                      <rect x="8.4" y="12.5" width="1.7" height="1.7" fill="#fff" />
                    </svg>
                  </SideTab>
                </SideTabs>
              </DockBody>
            </RightDock>
          </MainRow>

          <StatusBar>
            <StatusCell $w={36}>
              <svg width="16" height="16" viewBox="0 0 16 16">
                <rect x="1.5" y="1.5" width="13" height="13" fill="#f3f3f3" stroke="#77787c" strokeWidth="3" />
              </svg>
            </StatusCell>
            <StatusCell $w={89}>工作平面</StatusCell>
            <StatusCell $w={195} $track={0.77}>
              X -22.733 Y -4.465 Z 0
            </StatusCell>
            <StatusCell $w={67}>毫米</StatusCell>
            <StatusCell $w={197}>
              <Swatch />
              默认值
            </StatusCell>
            <StatusCell $w={72}>锁定格点</StatusCell>
            <StatusCell $w={44}>正交</StatusCell>
            <StatusCell $w={64}>平面模式</StatusCell>
            <StatusCell $w={68} $chip $bold>
              物件锁点
            </StatusCell>
            <StatusCell $w={4} />
            <StatusCell $w={68} $chip $bold>
              智慧轨迹
            </StatusCell>
            <StatusCell $w={9} />
            <StatusCell $w={114} $track={0.4}>
              操作轴 (工作平面)
            </StatusCell>
            <LongChip $w={158} $chip $bold>
              <svg width="12" height="15" viewBox="0 0 12 15" fill="none" stroke="#b5b7bb">
                <path d="M3 7V4a3 3 0 016 0v3" />
                <rect x="1.5" y="7" width="9" height="7" rx="1" fill="#e3e4e8" />
              </svg>
              自动对齐工作平面 (物件
            </LongChip>
            <StatusCell $w={8} />
            <StatusCell $w={20}>
              <svg width="19" height="19" viewBox="0 0 19 19">
                <rect x="1.5" y="1.5" width="16" height="16" fill="#f3f3f3" stroke="#77787c" strokeWidth="3" />
              </svg>
            </StatusCell>
          </StatusBar>

          <Dialog>
            <DialogTitle>
              <RhinoLogo />
              文本物件
              <DialogClose>
                <svg width="11" height="11" viewBox="0 0 11 11">
                  <path d="M.5.5l10 10M10.5.5l-10 10" stroke="#222" />
                </svg>
              </DialogClose>
            </DialogTitle>

            <Row $mt={23} $h={23}>
              <FieldLabel $w={35}>高度:</FieldLabel>
              <Field $w={200}>
                1.000
                <Spinner>
                  <SpinTick $up />
                  <SpinTick />
                </Spinner>
              </Field>
              <FieldLabel>&nbsp;&nbsp;毫米</FieldLabel>
            </Row>

            <Row $mt={30} $h={23}>
              <FieldLabel $w={35}>字体:</FieldLabel>
              <Field $w={148}>
                Arial
                <Chevron />
              </Field>
              <FaceKeys>
                <FaceKey $w={13}>A</FaceKey>
                <FaceKey $w={9}>a</FaceKey>
                <FaceKey $w={28}>Abc</FaceKey>
                <FaceKey $w={25}>A-a</FaceKey>
              </FaceKeys>
            </Row>

            <Row $mt={6} $h={23}>
              <FormatKey $on>
                <svg width="16" height="12" viewBox="0 0 16 12" stroke="#111" strokeWidth="1.6">
                  <path d="M0 1h15M0 4.5h10M0 8h15M0 11.5h6" />
                </svg>
              </FormatKey>
              <FormatKey>
                <svg width="16" height="12" viewBox="0 0 16 12" stroke="#111" strokeWidth="1.6">
                  <path d="M1 1h14M3 4.5h10M1 8h14M5 11.5h6" />
                </svg>
              </FormatKey>
              <FormatKey>
                <svg width="16" height="12" viewBox="0 0 16 12" stroke="#111" strokeWidth="1.6">
                  <path d="M1 1h15M6 4.5h10M1 8h15M10 11.5h6" />
                </svg>
              </FormatKey>
              <FormatKey $on>
                <svg width="16" height="20" viewBox="0 0 16 20" stroke="#111" strokeWidth="1.8">
                  <path d="M0 3.5h15M0 7h15M0 10.5h15" />
                </svg>
              </FormatKey>
              <FormatKey>
                <svg width="16" height="12" viewBox="0 0 16 12" stroke="#111" strokeWidth="1.8">
                  <path d="M0 2h15M0 6h15M0 10h15" />
                </svg>
              </FormatKey>
              <FormatKey>
                <svg width="16" height="20" viewBox="0 0 16 20" stroke="#111" strokeWidth="1.8">
                  <path d="M0 9.5h15M0 13h15M0 16.5h15" />
                </svg>
              </FormatKey>
            </Row>

            <Row $mt={6} $h={25}>
              <FormatKey $w={30}>
                <StyleGlyph>B</StyleGlyph>
              </FormatKey>
              <FormatKey $w={18}>
                <StyleGlyph $italic>I</StyleGlyph>
              </FormatKey>
              <Divider />
              <FormatKey $w={18}>
                <Fraction>
                  1<b />2
                </Fraction>
              </FormatKey>
              <Field $w={42} $ml={2}>
                °
                <Chevron />
              </Field>
            </Row>

            <Row $mt={5} $h={23} $end>
              <FieldLabel $mr={1}>旋转:</FieldLabel>
              <Field $w={100}>
                0.00
                <Spinner>
                  <SpinTick $up />
                  <SpinTick />
                </Spinner>
              </Field>
            </Row>

            <Row $mt={5} $h={25}>
              <Field $w={267} $blue>
                <Selected>Rhino</Selected>
              </Field>
            </Row>

            <Row $mt={17} $h={16}>
              <FieldLabel>输出为:</FieldLabel>
            </Row>

            <RadioGroup>
              <RadioRow>
                <Radio $on />
                曲线
              </RadioRow>
              <RadioRow>
                <Radio />
                曲面
              </RadioRow>
              <RadioRow>
                <Radio />
                实体
                <FieldLabel>&nbsp;&nbsp;&nbsp;厚度:</FieldLabel>
                <Row $h={22}>
                  <Field $w={70} $ml={7} $dim>
                    10.000
                  </Field>
                </Row>
              </RadioRow>
            </RadioGroup>

            <Row $mt={8}>
              <DialogBox />
              <FieldLabel>建立群组</FieldLabel>
            </Row>
            <Row $mt={6}>
              <DialogBox />
              <FieldLabel>雕刻字体</FieldLabel>
            </Row>
            <Row $mt={9}>
              <DialogBox />
              <FieldLabel $w={57}>小型大写</FieldLabel>
              <Field $w={49} $dim>
                80
                <Spinner>
                  <SpinTick $up $dim />
                  <SpinTick $dim />
                </Spinner>
              </Field>
              <FieldLabel>&nbsp;&nbsp;%</FieldLabel>
            </Row>
            <Row $mt={10}>
              <DialogBox />
              <FieldLabel $w={57}>增加间隔</FieldLabel>
              <Field $w={70} $dim>
                0.000000
              </Field>
            </Row>
            <Row $mt={9}>
              <DialogBox />
              <FieldLabel>使用文本中心定位</FieldLabel>
            </Row>

            <DialogButtons>
              <DialogButton>确定(K)</DialogButton>
              <DialogButton>取消(A)</DialogButton>
              <DialogButton>说明</DialogButton>
            </DialogButtons>
          </Dialog>
        </Window>

        <RightSliver>
          <DarkCap $h={68} />
        </RightSliver>

        <BottomSliver>
          <BottomText>某些情况下使用参数化设计丨是时发生的错误</BottomText>
        </BottomSliver>
      </Desktop>
    </>
  );
};

export default App;
